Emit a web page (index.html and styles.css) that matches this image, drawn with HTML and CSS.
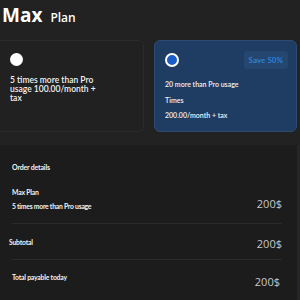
FILE: index.html
```html
<!DOCTYPE html>
<html>
<head>
<meta charset="utf-8">
<link rel="stylesheet" href="styles.css">
</head>
<body>
<div class="page">
  <header class="title">
    <span class="title-main">Max</span>
    <span class="title-sub">Plan</span>
  </header>
  <div class="plans">
    <div class="card">
      <div class="card-top"><span class="radio"></span></div>
      <p class="card-text">5 times more than Pro usage 100.00/month + tax</p>
    </div>
    <div class="card selected">
      <div class="card-top"><span class="radio on"></span><span class="badge">Save 50%</span></div>
      <p class="sel-line">20 more than Pro usage</p>
      <p class="sel-line">Times</p>
      <p class="sel-line">200.00/month + tax</p>
    </div>
  </div>
  <section class="order">
    <div class="order-head">Order details</div>
    <div class="row first">
      <div class="row-left">
        <div class="row-name">Max Plan</div>
        <div class="row-desc">5 times more than Pro usage</div>
      </div>
      <div class="price">200$</div>
    </div>
    <div class="row mid">
      <div class="row-name sub">Subtotal</div>
      <div class="price">200$</div>
    </div>
    <div class="row last">
      <div class="row-name">Total payable today</div>
      <div class="price">200$</div>
    </div>
  </section>
</div>
</body>
</html>
```
FILE: styles.css
```css
* { box-sizing: border-box; }
html, body { margin: 0; padding: 0; }
body {
  width: 300px;
  height: 300px;
  overflow: hidden;
  background: #222222;
  font-family: Lato, "Open Sans", sans-serif;
  color: #f2f2f2;
}
.page { display: flex; flex-direction: column; }
.title {
  display: flex;
  align-items: baseline;
  gap: 8px;
  padding: 2px 0 0 2px;
  height: 40px;
}
.title-main {
  font-family: "Open Sans", sans-serif;
  font-weight: 700;
  font-size: 19px;
  color: #ffffff;
}
.title-sub {
  font-family: "Open Sans", sans-serif;
  font-weight: 600;
  font-size: 12px;
  color: #ffffff;
}
.plans {
  display: grid;
  grid-template-columns: 144px 143px;
  gap: 10px;
  padding: 0 3px 0 0;
  height: 92px;
}
.card {
  background: #212121;
  border: 1px solid #2b2b2b;
  border-left: none;
  border-radius: 0 6px 6px 0;
  padding: 8px 8px 0 10px;
}
.card.selected {
  background: #1f3d62;
  border: 1px solid #2d4b72;
  border-radius: 6px;
  padding: 9px 8px 0 10px;
}
.card-top {
  display: flex;
  justify-content: space-between;
  align-items: center;
  height: 20px;
}
.radio {
  width: 13px;
  height: 13px;
  border-radius: 50%;
  background: #ffffff;
}
.radio.on {
  width: 14px;
  height: 14px;
  background: #1a5cc8;
  border: 2.5px solid #ffffff;
}
.badge {
  background: #24466f;
  color: #2f80da;
  font-weight: 700;
  font-size: 8px;
  line-height: 8px;
  padding: 5px 5px;
  border-radius: 3px;
}
.card-text {
  margin: 7px 0 0;
  font-size: 8.5px;
  line-height: 9px;
  font-weight: 600;
  width: 92px;
}
.sel-line {
  margin: 0;
  font-size: 7px;
  font-weight: 600;
  line-height: 8px;
}
.card.selected .sel-line:first-of-type { margin-top: 10px; }
.card.selected .sel-line:nth-of-type(2) { margin-top: 8px; }
.card.selected .sel-line:nth-of-type(3) { margin-top: 7px; }
.order {
  margin-top: 13px;
  background: #1c1c1c;
  border-right: 3px solid #262626;
  height: 155px;
  padding: 18px 15px 0 12px;
}
.order-head {
  font-size: 7px;
  font-weight: 700;
  line-height: 8px;
  letter-spacing: -0.2px;
}
.row {
  display: flex;
  justify-content: space-between;
  border-bottom: 1px solid #2a2a2a;
}
.row.first {
  height: 53px;
  align-items: flex-end;
  padding-bottom: 13px;
}
.row.mid {
  height: 36px;
  align-items: center;
}
.row.mid .price { padding-top: 4px; }
.row.last {
  border-bottom: none;
  height: 40px;
  align-items: flex-start;
}
.row.last .row-name { padding-top: 13px; }
.row.last .price { padding-top: 16px; margin-right: 2px; }
.row-name {
  font-size: 6.8px;
  font-weight: 700;
  line-height: 8px;
  letter-spacing: -0.2px;
  color: #f2f2f2;
}
.row-name.sub { margin-left: -3px; }
.row-left .row-name { margin-bottom: 6px; }
.row-desc {
  font-size: 6.8px;
  font-weight: 700;
  line-height: 8px;
  letter-spacing: -0.25px;
  color: #f2f2f2;
}
.price {
  font-family: "Open Sans", sans-serif;
  font-size: 11px;
  line-height: 12px;
  color: #c8c8c8;
}
```
